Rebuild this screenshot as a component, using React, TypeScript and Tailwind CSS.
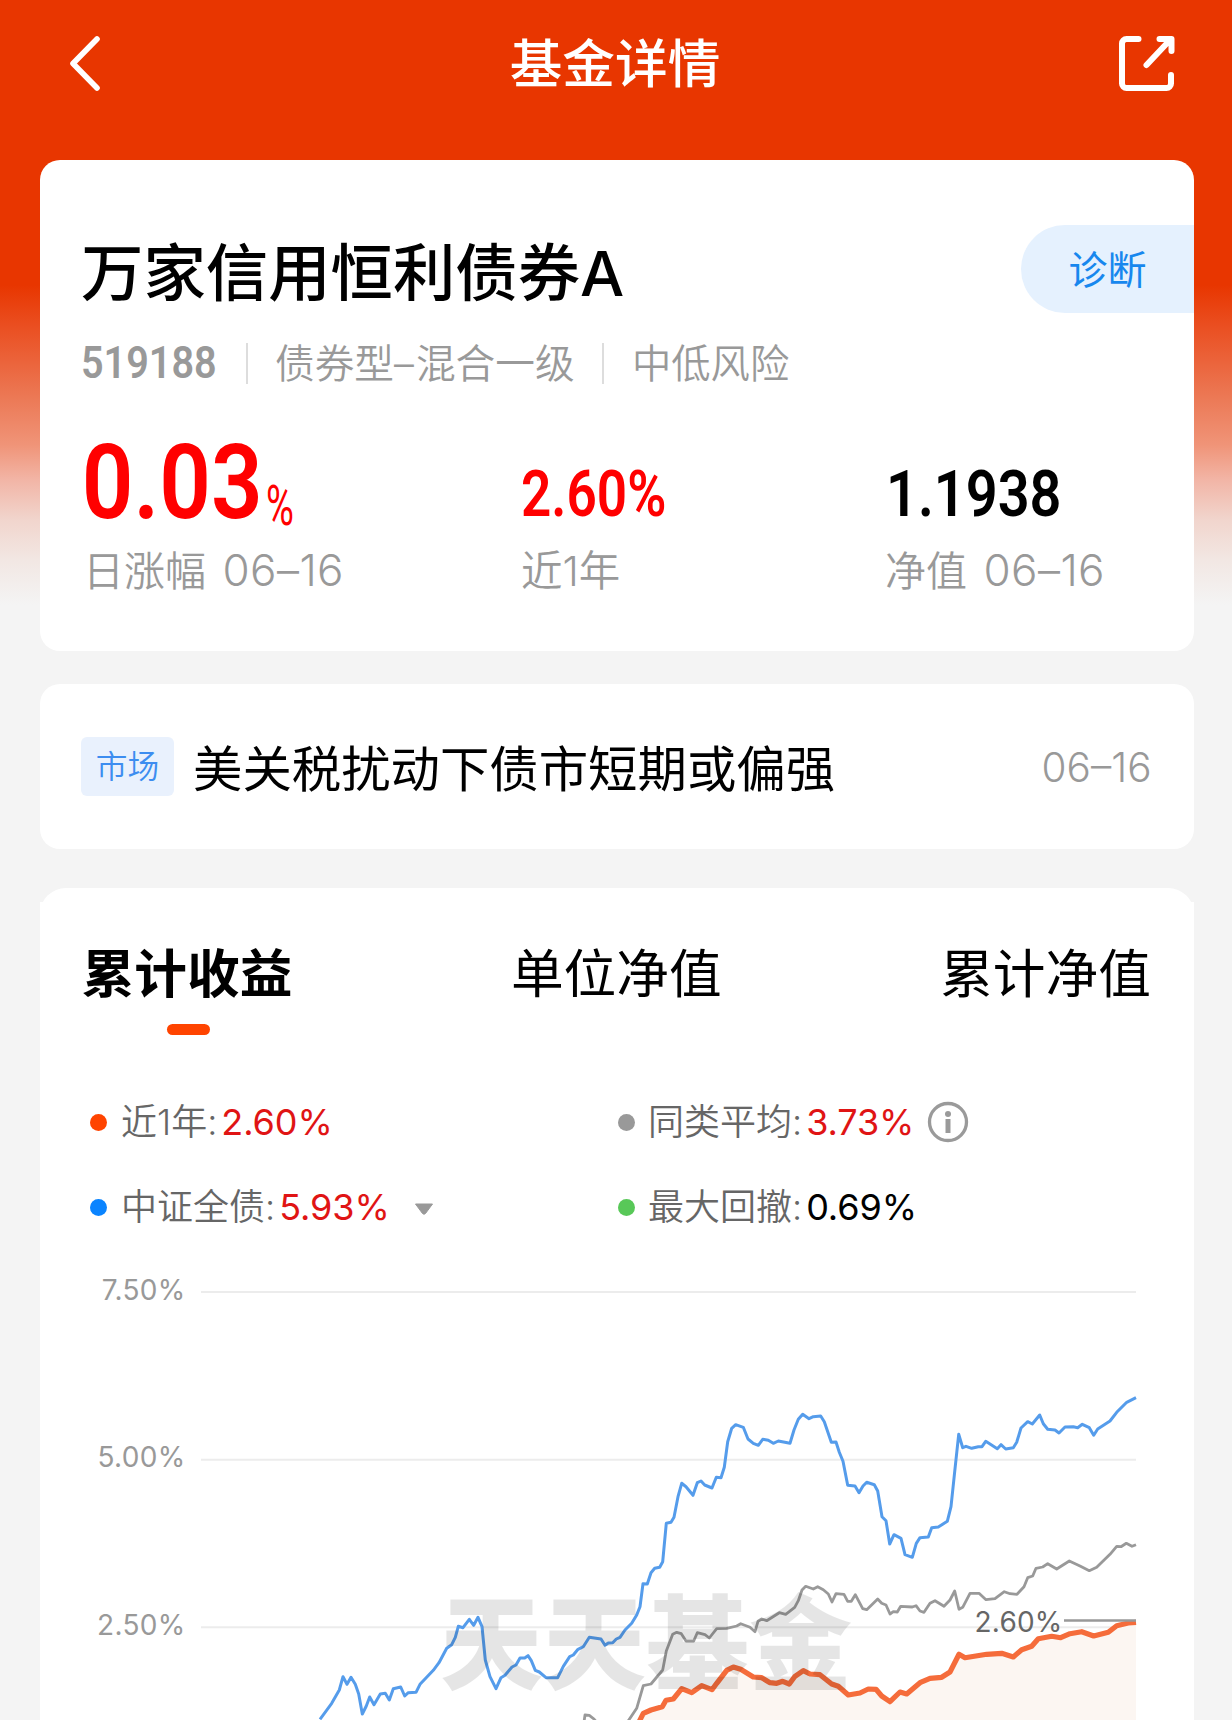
import { useState } from 'react';

// --- Chart series (svg user units) ---
const INDEX_LINE =
  '320,1719.3 331.7,1703.3 339.3,1690 343,1676.7 347,1684.3 351,1677.3 355.3,1684.3 358.7,1694 362.3,1714 366.3,1706 369.7,1697 374,1704.7 380.3,1694 385.3,1693.3 389.3,1700 393.3,1688.7 400.7,1687 404.7,1696 408.3,1692.7 416,1692.3 420,1684.3 433.3,1670.3 439,1662.7 446.7,1648.3 451.7,1644.7 455.3,1637.3 458.3,1626.3 463,1627.7 469.3,1619.3 473.7,1625.3 478,1617.3 482,1626.7 485.3,1660 490,1676.7 496,1688.7 501,1677.7 505,1675.3 512,1667 516,1665 520,1658 524.7,1658 528,1655.7 531.3,1660.7 535.3,1670.3 539.3,1672 546,1677.7 557.7,1677.7 563.3,1666.3 569.7,1656.7 573.3,1655 578,1649.3 583.3,1646.7 589.3,1637.3 601,1639 605,1645.3 608.3,1643 612.7,1642.7 616.3,1639 620,1637.3 625,1630 631.7,1623.3 636.7,1615 640,1606.7 643,1583.7 647.3,1584 651,1572.7 654.7,1568.3 659.7,1567.3 662.7,1561.7 666.3,1523.3 671,1522.3 674,1517.3 678,1496.7 681.7,1483.3 686,1486.7 693,1495.3 697.3,1482.7 701,1481 704.7,1485 712,1488 716.3,1477.3 721,1477.7 724.3,1467.3 727.7,1441.7 731.7,1428.3 735.7,1424.7 743.3,1427.3 748,1439 753.3,1443.3 758.3,1445.3 762.7,1439.3 768.3,1440.3 773.3,1443.3 778.3,1441 790,1443.3 794,1430 798.3,1419.3 802.7,1414.3 809,1418.7 813.3,1416.7 820.7,1416 824.3,1421.7 831.3,1442.3 836,1442 839.3,1452.3 843,1461.3 847.7,1485.3 855,1486 859,1492.7 863,1486 866.7,1482.3 874.3,1484.7 877.7,1491 882,1516.7 886,1520.7 889.7,1544 894,1534.7 901,1538.3 905,1554.7 912.3,1557.3 916.3,1543.3 920,1537.7 928.3,1537 931.7,1527.7 938.3,1527 947.3,1521.3 951,1506.7 954.7,1471.7 958.7,1434.3 962.7,1447.7 966,1446.3 971.7,1448.3 978.3,1446.7 982,1446.7 985.7,1441.3 990,1444 997.3,1448.7 1001,1444.7 1005.7,1449 1013.3,1447.7 1016.7,1442.3 1021,1428 1027.7,1421.7 1032.3,1424 1039.7,1415 1043.3,1423.7 1047.7,1429.3 1055,1430 1059,1433 1065,1427 1073.3,1426.7 1077.7,1427.7 1082.3,1424.3 1089.3,1427.7 1093.7,1435.3 1097.7,1429 1110,1421 1116.7,1412.3 1126.7,1402.3 1136,1397.7';
const PEER_LINE =
  '584,1722 585,1715 589.3,1715.3 594,1719 598,1724 626,1724 629.3,1719.3 636.7,1708.3 643.3,1685.7 651,1684 662.7,1670 666.3,1651 672.7,1634.3 676.7,1632.3 681.3,1633.7 686,1641 693.7,1641 697.3,1632.7 705,1634.7 709.3,1638 716.7,1628.7 726.7,1628.3 736.7,1626 740.7,1623.7 750,1627.3 755,1631.7 758,1621.3 761.7,1619 766.7,1620.7 779.3,1612.7 785.7,1614.3 794.7,1607.3 798.3,1600.7 802,1590 805.7,1586.3 813.3,1589 817.7,1586.7 823.3,1589.7 828.3,1594 832,1602 836,1593.7 844,1594.3 847.7,1601.3 851.3,1601.3 855.3,1594.7 862.7,1608.7 866.7,1609.7 877.7,1599 881.7,1603.3 886,1605 890,1614 893.3,1611.7 897.3,1612 900.7,1606.3 912.3,1607 916,1605.7 920,1611 924,1612.3 930,1603.3 935,1600.7 944,1606.3 950,1600 954.7,1591 959,1609.3 962.7,1607.3 970,1593.3 979,1593.3 986,1599.7 995,1598.7 1004.3,1591.7 1010,1593.7 1017,1594.3 1024,1586.7 1027.7,1577.7 1032.7,1576 1036,1568.3 1042.7,1567 1047.7,1563.7 1056.7,1569 1069.3,1561 1080,1566 1089.3,1570.7 1096.7,1567.3 1110,1554.3 1116.7,1546.3 1121,1546.7 1126.3,1543.3 1132,1546.3 1136,1544.7';
const FUND_LINE =
  '638,1724 643.3,1713.3 651,1710 662.3,1706.7 666,1700.3 673.3,1699 681.7,1688.7 691.7,1692.7 701.7,1685.7 712,1689.7 716.7,1683.3 726.7,1670.3 733.3,1667 740.7,1669.3 753.3,1677 761.7,1677.7 770,1682.7 776.7,1683.3 782.7,1681.3 789.3,1684 795,1676.3 803.3,1670.7 810,1674 820,1674.7 831.7,1684 838.3,1686.3 848.3,1695 860,1693 868.3,1689 876,1689.3 881.7,1696 890,1701.7 900,1692 906.7,1694 920,1682.7 930,1678.3 941.7,1677.3 950,1672 959,1654.3 965,1657.7 986.7,1654.3 1001.7,1653.3 1013.3,1657 1021.7,1649.7 1031.7,1646.3 1038.3,1638.7 1051.7,1636.3 1060.7,1637.7 1070,1633.7 1081.7,1631.7 1093.7,1636 1108.3,1632.3 1116.7,1625.7 1128.3,1623 1136,1622.3';

const GRID = [
  { y: 1292, label: '7.50%' },
  { y: 1459.7, label: '5.00%' },
  { y: 1627.3, label: '2.50%' },
];

const TABS = ['累计收益', '单位净值', '累计净值'];

function BackIcon() {
  return (
    <svg width="32" height="58" viewBox="0 0 32 58" fill="none" stroke="#fff" strokeWidth="5.6" strokeLinecap="round" strokeLinejoin="round">
      <path d="M29 4 5 28.500 29 53" />
    </svg>
  );
}

function ShareIcon() {
  return (
    <svg width="57" height="57" viewBox="0 0 57 57" fill="none" stroke="#fff" strokeWidth="6" strokeLinecap="round" strokeLinejoin="round">
      <path d="M20.500 4H8.500a4.500 4.500 0 0 0-4.500 4.500v40a4.500 4.500 0 0 0 4.500 4.500h40a4.500 4.500 0 0 0 4.500-4.500V40" />
      <path d="M41.500 4h12v12M52 5 28.500 30" />
      <path d="M45 4h8v10z" fill="#fff" stroke="none" />
    </svg>
  );
}

function InfoIcon() {
  return (
    <svg width="42" height="42" viewBox="0 0 42 42" className="ml-[13px]">
      <circle cx="21" cy="21" r="18.500" fill="none" stroke="#9a9a9a" strokeWidth="3.300" />
      <circle cx="21" cy="13" r="3" fill="#9a9a9a" />
      <path d="M21 18v14" stroke="#9a9a9a" strokeWidth="5" />
    </svg>
  );
}

function Chart() {
  return (
    <svg width="1154" height="470" viewBox="40 1250 1154 470" className="block">
      {GRID.map((g) => (
        <g key={g.label}>
          <path d={`M201 ${g.y}H1136`} stroke="#ececec" strokeWidth="2" />
          <text x="185.500" y={g.y + 7.5} textAnchor="end" fill="#999" fontSize="28" className="tracking-[0.3px]">{g.label}</text>
        </g>
      ))}
      <polygon points={`${FUND_LINE} 1136,1724`} fill="#fcf6f2" />
      <g fill="none" strokeLinejoin="round">
        <polyline points={PEER_LINE} stroke="#999" strokeWidth="2.800" />
        <polyline points={INDEX_LINE} stroke="#559ceb" strokeWidth="3" />
        <polyline points={FUND_LINE} stroke="#f56c3b" strokeWidth="5.200" />
      </g>
      <path d="M1064 1620.500H1136" stroke="#999" strokeWidth="2.600" />
      <text x="1062.500" y="1631.500" textAnchor="end" fill="#666" fontSize="28" className="tracking-[0.2px]">2.60%</text>
      <text x="440" y="1682" fontSize="103" fontWeight="900" fill="#000" fillOpacity="0.1">天天基金</text>
    </svg>
  );
}

export default function FundDetail() {
  const [tab, setTab] = useState(0);

  return (
    <div className="w-[1232px] h-[1720px] overflow-hidden bg-[#f4f4f4] bg-[linear-gradient(to_bottom,#e83600_0px,#e83600_285px,#ea4e20_325px,#ec7a57_400px,#f09478_445px,#f2b5a6_480px,#f1d5cd_520px,#f2e7e3_560px,#f4f4f4_605px)] font-[Inter,'Noto_Sans_CJK_SC',sans-serif]">
      {/* Header */}
      <header className="h-[160px] pr-[57px] pt-[35px] pl-[68px] flex justify-between items-start text-white">
        <BackIcon />
        <h1 className="mt-px ml-3 text-[52.700px] leading-[56px] font-medium">基金详情</h1>
        <ShareIcon />
      </header>

      <main className="pl-10 w-[1193.500px]">
        {/* Summary card */}
        <section className="h-[491px] rounded-[20px] bg-white pl-[41px] pt-[65px]">
          <div className="flex justify-between">
            <h2 className="pt-[5px] text-[62.400px] leading-[88px] font-medium text-black whitespace-nowrap">万家信用恒利债券A</h2>
            <button className="w-[173px] h-[88px] rounded-l-full bg-[#e5f1fe] text-[#1787ee] text-[39px] leading-[90px] pl-[48px] text-left">诊断</button>
          </div>
          <div className="flex items-center h-[42px] mt-6 text-[#999] text-[39.700px] leading-[44px] font-[350] whitespace-nowrap">
            <span className="w-[165px] font-[Roboto] font-semibold text-[45px]"><span className="inline-block origin-left scale-x-[0.88]">519188</span></span>
            <i className="w-[2px] h-[41px] bg-[#ddd]" />
            <span className="w-[327px] ml-[27px] pt-px">债券型<span className="tracking-[2px]">–</span>混合一级</span>
            <i className="w-[2px] h-[41px] bg-[#ddd]" />
            <span className="ml-[28px] pt-px text-[39.300px]">中低风险</span>
          </div>
          <div className="flex mt-[48px] text-[41px] text-[#999] font-[350] whitespace-nowrap">
            <div className="w-[440px]">
              <div className="h-[96px] flex items-end font-[Roboto] font-semibold text-[#f00]">
                <div className="w-[185px] h-[89px]">
                  <span className="inline-block w-[205px] text-[104px] leading-[88px] origin-left scale-x-[0.87] pl-px">0.03</span>
                </div>
                <span className="text-[56px] leading-[36px] pb-1 origin-left scale-x-[0.68] font-normal">%</span>
              </div>
              <div className="mt-[17px] leading-[50px] pl-[2px]">日涨幅 <span className="ml-[5px] tracking-[0.4px] text-[44px]">06–16</span></div>
            </div>
            <div className="w-[365px]">
              <div className="h-[96px] pt-[32px] text-[64px] leading-[62px] font-[Roboto] font-semibold text-[#f00] origin-left scale-x-[0.83]">2.60%</div>
              <div className="mt-[18px] leading-[50px] text-[41.500px]">近1年</div>
            </div>
            <div>
              <div className="h-[96px] pt-[32px] text-[64px] leading-[62px] font-[Roboto] font-semibold text-black origin-left scale-x-[0.873]">1.1938</div>
              <div className="mt-[17px] leading-[50px] -ml-px">净值 <span className="ml-[5px] tracking-[0.4px] text-[44px]">06–16</span></div>
            </div>
          </div>
        </section>

        {/* Market news */}
        <section className="mt-[33px] h-[165px] rounded-[20px] bg-white pl-[41px] pr-[42px] flex items-center">
          <span className="w-[93px] h-[59px] rounded-[6px] bg-[#e9f1fd] text-[#3d8df0] text-[31.700px] leading-[59px] font-[350] text-center">市场</span>
          <span className="ml-[19px] pt-1 text-[49.400px] leading-[60px] text-black">美关税扰动下债市短期或偏强</span>
          <span className="ml-auto pt-[3px] text-[40.500px] font-[350] text-[#999]">06–16</span>
        </section>

        {/* Performance */}
        <section className="mt-[39px]">
          <div className="h-[14px] overflow-hidden">
            <div className="h-12 rounded-t-[26px] bg-white" />
          </div>
          <div className="bg-white">
            <nav className="flex justify-between pl-[41px] pr-[42px] pt-[42px]">
              {TABS.map((t, i) => (
                <button key={t} onClick={() => setTab(i)} className={`w-[212px] text-[52.700px] leading-[60px] text-black ${tab === i ? 'font-bold' : 'font-normal'}`}>
                  {t}
                  <span className={`block mx-auto mt-5 w-[43px] h-[11px] rounded-full relative left-px ${tab === i ? 'bg-[#ff4400]' : ''}`} />
                </button>
              ))}
            </nav>

            <div className="pl-[50px] pt-[64px] text-[36px] leading-[46px] text-[#666] font-[350]">
              <div className="flex items-center h-[46px]">
                <div className="w-[528px] flex items-center">
                  <i className="size-[17px] mr-[14px] rounded-full bg-[#ff4400]" />近1年:
                  <span className="ml-1 -tracking-[0.1px] font-normal text-[#e01414]">2.60%</span>
                </div>
                <i className="size-[17px] mr-[13px] rounded-full bg-[#999]" />同类平均:
                <span className="ml-1 -tracking-[0.1px] font-normal text-[#e01414]">3.73%</span>
                <InfoIcon />
              </div>
              <div className="flex items-center h-[46px] mt-[39px]">
                <div className="w-[528px] flex items-center">
                  <i className="size-[17px] mr-[14px] rounded-full bg-[#0a84ff]" />中证全债:
                  <span className="ml-1 -tracking-[0.1px] font-normal text-[#e01414]">5.93%</span>
                  <svg width="20" height="14" viewBox="0 0 20 14" className="ml-6 mt-1">
                    <path d="M1.500 2h17L11.500 11.500q-1.500 1.500-3 0z" fill="#999" stroke="#999" strokeLinejoin="round" />
                  </svg>
                </div>
                <i className="size-[17px] mr-[13px] rounded-full bg-[#58c858]" />最大回撤:
                <span className="ml-1 -tracking-[0.1px] font-normal text-black">0.69%</span>
              </div>
            </div>

            <div className="mt-[20px]">
              <Chart />
            </div>
          </div>
        </section>
      </main>
    </div>
  );
}
